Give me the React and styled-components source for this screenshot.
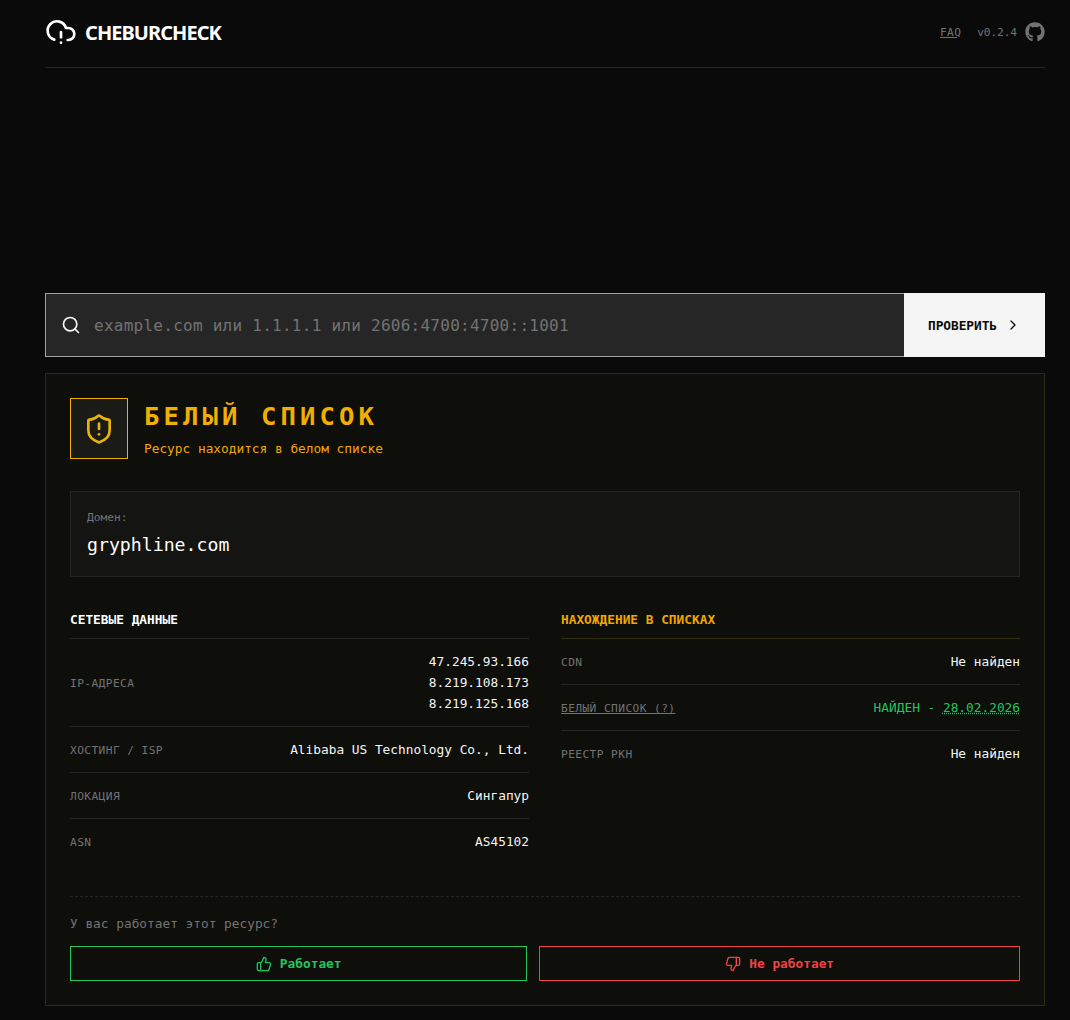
import React from 'react';
import styled, { createGlobalStyle } from 'styled-components';
import { CloudAlert, Search, ChevronRight, ShieldAlert, ThumbsUp, ThumbsDown } from 'lucide-react';
import { FaGithub } from 'react-icons/fa';

const mono = '"DejaVu Sans Mono", "Liberation Mono", monospace';

const Global = createGlobalStyle`
  html, body { margin: 0; padding: 0; background: #0a0a0a; }
  * { box-sizing: border-box; }
  body { font-family: ${mono}; color: #f5f5f5; }
`;

const Page = styled.div`
  width: 1000px;
  margin-left: 45px;
  display: flex;
  flex-direction: column;
`;
const Header = styled.header`
  height: 68px;
  display: flex;
  align-items: center;
  justify-content: space-between;
  border-bottom: 1px solid #262626;
  padding-bottom: 3px;
`;
const Logo = styled.div`
  display: flex;
  align-items: center;
  gap: 8px;
  color: #fff;
`;
const LogoText = styled.span`
  font-family: "Noto Sans", sans-serif;
  font-weight: 700;
  font-size: 20px;
  letter-spacing: -0.95px;
`;
const HeaderRight = styled.div`
  display: flex;
  align-items: center;
  gap: 16px;
  font-size: 11.2px;
  color: #737373;
`;
const FaqLink = styled.a`
  color: #737373;
  letter-spacing: 0.3px;
  text-decoration: underline;
`;
const Version = styled.div`
  display: flex;
  align-items: center;
  gap: 8px;
  letter-spacing: -0.1px;
`;
const SearchBar = styled.form`
  margin-top: 225px;
  height: 64px;
  display: flex;
  background: #262626;
  border: 1px solid #a3a3a3;
  border-right: none;
`;
const SearchField = styled.div`
  flex: 1;
  display: flex;
  align-items: center;
  gap: 13px;
  padding-left: 15px;
  color: #f5f5f5;
`;
const Placeholder = styled.span`
  font-size: 16px;
  letter-spacing: 0.26px;
  color: #737373;
`;
const SubmitButton = styled.button`
  width: 141px;
  margin: -1px 0;
  border: none;
  background: #f5f5f5;
  color: #0a0a0a;
  font-family: ${mono};
  font-weight: 700;
  font-size: 12.8px;
  letter-spacing: -0.05px;
  display: flex;
  align-items: center;
  justify-content: center;
  gap: 8px;
`;
const Card = styled.section`
  margin-top: 16px;
  height: 633px;
  border: 1px solid #2c2a12;
  background: #0e0e0b;
  padding: 24px;
  display: flex;
  flex-direction: column;
`;
const StatusRow = styled.div`
  display: flex;
  gap: 16px;
`;
const StatusIcon = styled.div`
  width: 58px;
  height: 61px;
  border: 1px solid #f0b000;
  background: #1a1a16;
  color: #eab308;
  display: flex;
  align-items: center;
  justify-content: center;
`;
const StatusText = styled.div`
  display: flex;
  flex-direction: column;
`;
const StatusTitle = styled.h1`
  margin: 0;
  font-size: 25.6px;
  font-weight: 700;
  line-height: 36px;
  letter-spacing: 4.1px;
  color: #f0b000;
`;
const StatusSub = styled.p`
  margin: 6px 0 0;
  font-size: 12.8px;
  line-height: 18px;
  color: #f0a800;
`;
const DomainBox = styled.div`
  margin-top: 32px;
  height: 86px;
  border: 1px solid #262626;
  background: #141412;
  padding: 18px 16px 0;
`;
const DomainLabel = styled.div`
  font-size: 11.2px;
  line-height: 16px;
  color: #737373;
`;
const DomainValue = styled.div`
  margin-top: 5px;
  font-size: 18.2px;
  line-height: 28px;
  color: #fff;
`;
const Columns = styled.div`
  margin-top: 28px;
  display: grid;
  grid-template-columns: 1fr 1fr;
  gap: 32px;
`;
const ColumnTitle = styled.h2`
  margin: 0;
  height: 34px;
  font-size: 12.8px;
  font-weight: 700;
  line-height: 30px;
  color: ${p => (p.$accent ? '#f0a800' : '#fff')};
  border-bottom: 1px solid ${p => (p.$accent ? '#33300f' : '#262626')};
`;
const Row = styled.div`
  display: flex;
  justify-content: space-between;
  align-items: center;
  padding: 12px 0;
  border-bottom: 1px solid ${p => (p.$last ? 'transparent' : '#262626')};
`;
const Label = styled.span`
  margin-top: 2px;
  font-size: 11.2px;
  letter-spacing: 0.42px;
  color: #737373;
  ${p => p.$underlined && 'text-decoration: underline;'}
`;
const Value = styled.span`
  font-size: 12.8px;
  line-height: 21px;
  text-align: right;
  color: ${p => (p.$found ? '#22c55e' : '#f5f5f5')};
  display: block;
`;
const Dotted = styled.span`
  text-decoration: underline dotted;
`;
const Feedback = styled.div`
  margin-top: 31px;
  border-top: 1px dashed #262626;
  padding-top: 19px;
`;
const FeedbackPrompt = styled.div`
  font-size: 12.8px;
  line-height: 16px;
  color: #737373;
`;
const FeedbackButtons = styled.div`
  margin-top: 14px;
  display: flex;
  gap: 12px;
`;
const VoteButton = styled.button`
  flex: ${p => p.$grow};
  height: 35px;
  background: transparent;
  border: 1px solid ${p => p.$color};
  color: ${p => p.$color};
  font-family: ${mono};
  font-weight: 700;
  font-size: 12.8px;
  display: flex;
  align-items: center;
  justify-content: center;
  gap: 8px;
`;

export default function App() {
  return (
    <Page>
      <Global />
      <Header>
        <Logo>
          <CloudAlert size={32} strokeWidth={2} />
          <LogoText>CHEBURCHECK</LogoText>
        </Logo>
        <HeaderRight>
          <FaqLink>FAQ</FaqLink>
          <Version>
            <span>v0.2.4</span>
            <FaGithub size={20} />
          </Version>
        </HeaderRight>
      </Header>
      <SearchBar>
        <SearchField>
          <Search size={20} />
          <Placeholder>example.com или 1.1.1.1 или 2606:4700:4700::1001</Placeholder>
        </SearchField>
        <SubmitButton type="button">
          ПРОВЕРИТЬ <ChevronRight size={16} />
        </SubmitButton>
      </SearchBar>
      <Card>
        <StatusRow>
          <StatusIcon><ShieldAlert size={32} /></StatusIcon>
          <StatusText>
            <StatusTitle>БЕЛЫЙ СПИСОК</StatusTitle>
            <StatusSub>Ресурс находится в белом списке</StatusSub>
          </StatusText>
        </StatusRow>
        <DomainBox>
          <DomainLabel>Домен:</DomainLabel>
          <DomainValue>gryphline.com</DomainValue>
        </DomainBox>
        <Columns>
          <div>
            <ColumnTitle>СЕТЕВЫЕ ДАННЫЕ</ColumnTitle>
            <Row>
              <Label>IP-АДРЕСА</Label>
              <div>
                <Value>47.245.93.166</Value>
                <Value>8.219.108.173</Value>
                <Value>8.219.125.168</Value>
              </div>
            </Row>
            <Row><Label>ХОСТИНГ / ISP</Label><Value>Alibaba US Technology Co., Ltd.</Value></Row>
            <Row><Label>ЛОКАЦИЯ</Label><Value>Сингапур</Value></Row>
            <Row $last><Label>ASN</Label><Value>AS45102</Value></Row>
          </div>
          <div>
            <ColumnTitle $accent>НАХОЖДЕНИЕ В СПИСКАХ</ColumnTitle>
            <Row><Label>CDN</Label><Value>Не найден</Value></Row>
            <Row><Label $underlined>БЕЛЫЙ СПИСОК (?)</Label><Value $found>НАЙДЕН - <Dotted>28.02.2026</Dotted></Value></Row>
            <Row $last><Label>РЕЕСТР РКН</Label><Value>Не найден</Value></Row>
          </div>
        </Columns>
        <Feedback>
          <FeedbackPrompt>У вас работает этот ресурс?</FeedbackPrompt>
          <FeedbackButtons>
            <VoteButton $grow="457 1 0" $color="#22c55e"><ThumbsUp size={16} />Работает</VoteButton>
            <VoteButton $grow="481 1 0" $color="#ef4444"><ThumbsDown size={16} />Не работает</VoteButton>
          </FeedbackButtons>
        </Feedback>
      </Card>
    </Page>
  );
}
